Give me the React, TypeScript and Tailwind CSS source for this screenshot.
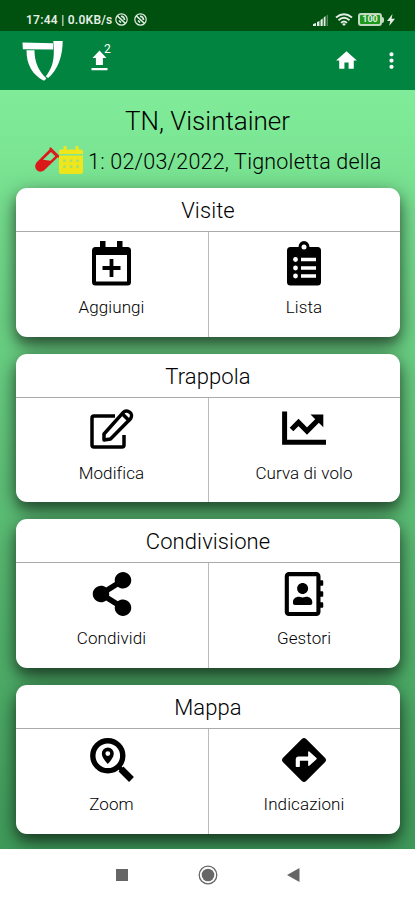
import type { ReactNode } from "react";
import { FaDirections, FaRegAddressBook, FaShareAlt } from "react-icons/fa";
import { MdHome, MdMoreVert } from "react-icons/md";

type Action = { label: string; icon: ReactNode };
type Section = { title: string; actions: Action[] };

const SECTIONS: Section[] = [
  {
    title: "Visite",
    actions: [
      { label: "Aggiungi", icon: <CalendarAddIcon /> },
      { label: "Lista", icon: <ClipboardIcon /> },
    ],
  },
  {
    title: "Trappola",
    actions: [
      { label: "Modifica", icon: <EditIcon /> },
      { label: "Curva di volo", icon: <ChartIcon /> },
    ],
  },
  {
    title: "Condivisione",
    actions: [
      { label: "Condividi", icon: <FaShareAlt size={44} /> },
      { label: "Gestori", icon: <FaRegAddressBook size={44} /> },
    ],
  },
  {
    title: "Mappa",
    actions: [
      { label: "Zoom", icon: <ZoomPinIcon /> },
      { label: "Indicazioni", icon: <FaDirections size={44} /> },
    ],
  },
];

export default function App() {
  return (
    <div className="flex h-[900px] w-[415px] flex-col overflow-hidden bg-white font-[Roboto,sans-serif] text-black">
      <StatusBar />
      <AppBar />
      <main className="h-[759px] overflow-hidden bg-linear-to-b from-[#80ec99] to-[#3f9b5a] px-4">
        <h1 className="pt-[15px] text-center text-[26px] leading-[32px] font-light whitespace-nowrap">TN, Visintainer</h1>
        <div className="mt-[8px] flex h-[30px] items-center pl-[18px]">
          <VialIcon />
          <CalendarIcon />
          <span className="ml-[5px] pt-[3px] text-[21.5px] leading-[30px] font-light tracking-[0.2px] whitespace-nowrap">1: 02/03/2022, Tignoletta della</span>
        </div>
        <div className="mt-[13px] flex flex-col gap-[17px]">
          {SECTIONS.map((s) => (
            <Card key={s.title} section={s} />
          ))}
        </div>
      </main>
      <NavBar />
    </div>
  );
}

function Card({ section }: { section: Section }) {
  return (
    <section className="h-[148.7px] w-[384px] overflow-hidden rounded-[11px] bg-white shadow-[0_7px_22px_rgba(0,0,0,0.55),0_7px_10px_rgba(0,0,0,0.25)]">
      <h2 className="h-[44px] border-b border-[#aaa] text-center text-[22px] leading-[45px] font-light tracking-[0.1px]">{section.title}</h2>
      <div className="grid h-[105px] grid-cols-[193px_1fr] divide-x divide-[#bbb]">
        {section.actions.map((a) => (
          <button key={a.label} className="flex flex-col items-center pt-[9px] pr-px">
            <span className="flex h-[44px] items-center">{a.icon}</span>
            <span className="mt-[11px] text-[17px] leading-[22px] font-light tracking-[0.1px] whitespace-nowrap">{a.label}</span>
          </button>
        ))}
      </div>
    </section>
  );
}

function StatusBar() {
  return (
    <div className="flex h-[31px] shrink-0 items-center bg-[#00500f] pt-[8px] pr-[20px] pl-[26px] text-[#e3ede3]">
      <span className="text-[12px] leading-[16px] font-semibold tracking-[0.25px] whitespace-nowrap">17:44 | 0.0KB/s</span>
      <MutedIcon className="ml-[2px]" />
      <MutedIcon className="ml-[6px]" />
      <svg width="16" height="12" viewBox="0 0 16 12" className="ml-auto" fill="currentColor">
        <path d="M0 12V10L3 9v3zM4 12V8l2.500-1v5zM7.500 12V6l2.200-1.500V12zM10.700 12V3.500L12.500 2v10z" />
        <path d="M13.500 12V1.500L15 .5V12z" opacity=".35" />
      </svg>
      <svg width="18" height="14" viewBox="0 0 18 14" className="ml-[6px]" fill="none" stroke="currentColor" strokeWidth="1.900">
        <path d="M1 4.500Q9-2 17 4.500M3.500 7.200Q9 2.500 14.500 7.200M6 9.900q3-2.600 6 0" />
        <path d="M9 13l-2-2q2-1.400 4 0z" fill="currentColor" stroke="none" />
      </svg>
      <span className="ml-[5px] flex h-[13px] w-[24px] items-center justify-center rounded-[3px] border-2 border-[#c3d9c0] bg-[#1b9a1b] text-[9px] leading-[9px] font-bold">100</span>
      <span className="h-[6px] w-[2px] rounded-r-sm bg-[#c3d9c0]" />
      <svg width="8" height="12" viewBox="0 0 8 12" className="ml-[3px]" fill="currentColor">
        <path d="M5.500 0L0 7h3.200L2.200 12 8 4.800H4.600z" />
      </svg>
    </div>
  );
}

function AppBar() {
  return (
    <header className="flex h-[59px] shrink-0 items-start bg-[#00843f] pl-[22px] text-white">
      <svg width="42" height="42" viewBox="0 0 42 42" className="mt-[9px]" fill="currentColor">
        <path d="M.500 2.500L31 3.200v6.400L.900 9.300z" />
        <path d="M31.300 1h9.400c0 15-5 29-14.500 37l-2.500-1.600C29.500 29 32 22 31.800 10z" />
        <path d="M4.500 10.300h8c0 11 3.500 20.500 12 28.200l-2.500 2.300C10.500 35 4.500 25 4.500 10.300z" />
      </svg>
      <div className="ml-[27px] flex">
        <svg width="17" height="21" viewBox="0 0 17 21" className="mt-[19px]" fill="currentColor">
          <path d="M8.500.500L15.500 8h-3.600v7H4.900V8H1.500zM.500 18h16v2.200H.500z" />
        </svg>
        <sup className="top-0 -ml-[4px] mt-[12px] text-[12px] leading-[12px]">2</sup>
      </div>
      <MdHome size={25} className="mt-[17px] ml-auto" />
      <MdMoreVert size={25} className="mt-[17px] mr-[11px] ml-[20px]" />
    </header>
  );
}

function NavBar() {
  return (
    <nav className="flex flex-1 items-center justify-between bg-white pt-px pr-[115px] pl-[116px] text-[#666]">
      <span className="h-[12px] w-[12px] bg-current" />
      <svg width="20" height="20" viewBox="0 0 20 20">
        <circle cx="10" cy="10" r="8.800" fill="none" stroke="currentColor" strokeWidth="1.300" />
        <circle cx="10" cy="10" r="6.300" fill="currentColor" />
      </svg>
      <svg width="13" height="14" viewBox="0 0 13 14" fill="currentColor">
        <path d="M0 7L12.500 0v14z" />
      </svg>
    </nav>
  );
}

function MutedIcon({ className }: { className: string }) {
  return (
    <svg width="13" height="13" viewBox="0 0 13 13" className={className} fill="none" stroke="currentColor">
      <circle cx="6.500" cy="6.500" r="5.700" strokeWidth="1.200" />
      <path d="M2.500 3l8 7.500M4 7.500l2 2M6 3.500q3-.500 3.500 3.500" strokeWidth="1.700" />
    </svg>
  );
}

function VialIcon() {
  return (
    <svg width="26" height="26" viewBox="0 0 26 26">
      <path d="M16 2L24 10 10.500 23C4.500 28-2 20.500 3 15z" fill="#dc1919" />
      <path d="M17 5l4.300 4.300-4.800 4.400-7.500-1z" fill="#80e598" />
      <path d="M16.500 1.500l8 8" stroke="#dc1919" strokeWidth="2.200" strokeLinecap="round" />
    </svg>
  );
}

function CalendarIcon() {
  return (
    <svg width="24" height="28" viewBox="0 0 24 28" className="-ml-px shrink-0">
      <path d="M4.500 0h3v3.500h9V0h3v3.500H22a2 2 0 0 1 2 2V8H0V5.500a2 2 0 0 1 2-2h2.500zM0 9.500h24V26a2 2 0 0 1-2 2H2a2 2 0 0 1-2-2z" fill="#f0e61c" />
      <path d="M5.500 13.500v11M12 13.500v11M18.500 13.500v11" stroke="#a5e26a" strokeWidth="2.600" strokeDasharray="2.600 3.200" />
    </svg>
  );
}

function CalendarAddIcon() {
  return (
    <svg width="39" height="45" viewBox="0 0 39 45">
      <path fillRule="evenodd" d="M8 0h5.500v6H25V0h5.500v6H35.500a3.500 3.500 0 0 1 3.500 3.500V41a3.500 3.500 0 0 1-3.500 3.500h-32A3.500 3.500 0 0 1 0 41V9.500A3.500 3.500 0 0 1 3.500 6H8zM4 14v26.500h31V14z" />
      <path d="M19.500 18v18M10.500 27h18" stroke="currentColor" strokeWidth="3.800" />
    </svg>
  );
}

function ClipboardIcon() {
  return (
    <svg width="34" height="45" viewBox="0 0 34 45">
      <path d="M3.500 6h8a5.500 6 0 0 1 11 0h8A3.500 3.500 0 0 1 34 9.500V41a3.500 3.500 0 0 1-3.500 3.500h-27A3.500 3.500 0 0 1 0 41V9.500A3.500 3.500 0 0 1 3.500 6z" />
      <circle cx="17" cy="6" r="2.500" fill="white" />
      <path d="M14 18.500h15M14 27h15M14 35h15" stroke="white" strokeWidth="3.500" />
      <g fill="white">
        <circle cx="8.500" cy="18.500" r="2.400" />
        <circle cx="8.500" cy="27" r="2.400" />
        <circle cx="8.500" cy="35" r="2.400" />
      </g>
    </svg>
  );
}

function EditIcon() {
  return (
    <svg width="44" height="40" viewBox="0 0 44 40" fill="none" stroke="currentColor" strokeWidth="3.500" strokeLinejoin="round">
      <path d="M25 7H4a2 2 0 0 0-2 2v27a2 2 0 0 0 2 2h28a2 2 0 0 0 2-2V26" />
      <path d="M14 31v-6L33.300 3.400a4.500 4.500 0 0 1 6.400-.200 4.500 4.500 0 0 1 1 6.200L20.500 30z" />
      <path d="M32 4.500l8 8" />
    </svg>
  );
}

function ChartIcon() {
  return (
    <svg width="44" height="34" viewBox="0 0 44 34" className="-mt-px" fill="none" stroke="currentColor">
      <path d="M2.600.500v30.700H44" strokeWidth="5" />
      <path d="M9.500 18.500l7-7 8.500 8.500L37 8" strokeWidth="5.200" />
      <path d="M28.500 3.500h12.800v12.800z" fill="currentColor" stroke="none" />
    </svg>
  );
}

function ZoomPinIcon() {
  return (
    <svg width="44" height="44" viewBox="0 0 44 44" fill="none" stroke="currentColor">
      <circle cx="17.800" cy="17.800" r="15" strokeWidth="5.400" />
      <path d="M27.500 27.500l6 6" strokeWidth="4.500" />
      <path d="M31 31l10.500 10.500" strokeWidth="6.800" />
      <path fillRule="evenodd" d="M17.800 9.500a6 6 0 0 1 6 6c0 3.500-3 7-6 10.500-3-3.500-6-7-6-10.500a6 6 0 0 1 6-6zm0 3.700a2.400 2.400 0 1 0 0 4.800 2.400 2.400 0 0 0 0-4.800z" fill="currentColor" stroke="none" />
    </svg>
  );
}
